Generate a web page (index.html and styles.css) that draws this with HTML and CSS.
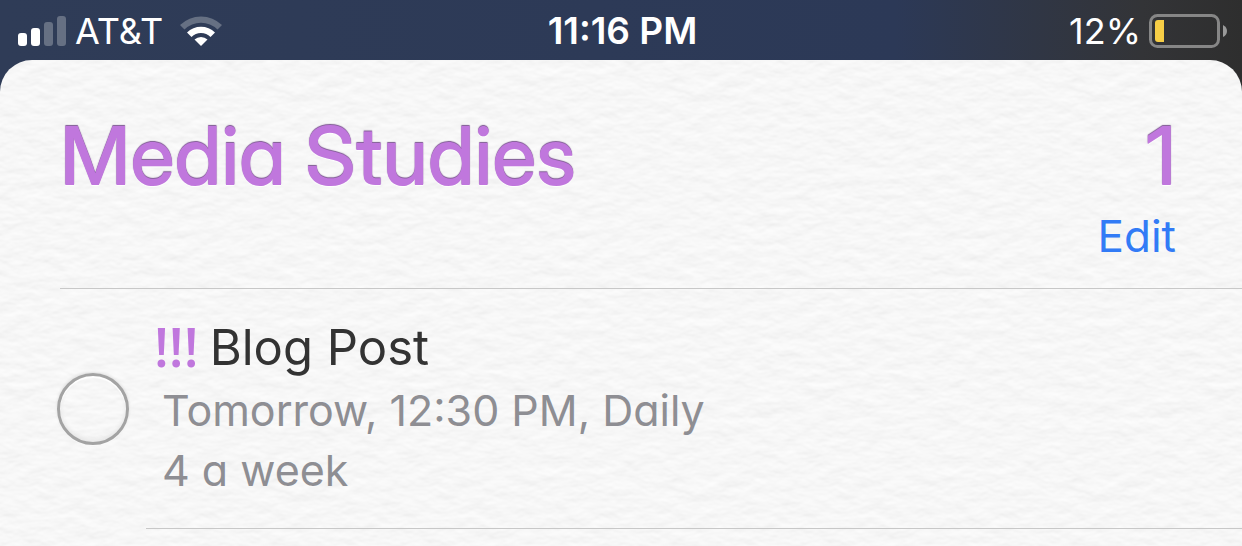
FILE: index.html
```html
<!DOCTYPE html>
<html lang="en">
<head>
  <meta charset="UTF-8" />
  <meta name="viewport" content="width=device-width, initial-scale=1.0"/>
  <title>Media Studies</title>
  <link rel="stylesheet" href="styles.css">
</head>
<body>
  <div class="status-bar">
    <div class="status-left">
      <svg class="signal" width="48" height="30" viewBox="0 0 48 30" aria-hidden="true">
        <rect x="0" y="17" width="9" height="13" rx="3" fill="#fff"/>
        <rect x="13" y="12" width="9" height="18" rx="3" fill="#fff"/>
        <rect x="26" y="6" width="9" height="24" rx="3" fill="#667083"/>
        <rect x="39" y="0" width="9" height="30" rx="3" fill="#667083"/>
      </svg>
      <span>AT&amp;T</span>
      <svg class="wifi" width="42" height="30" viewBox="0 0 42 30" aria-hidden="true">
        <path d="M0 9 A30 30 0 0 1 42 9 L37.500 13.500 A23.500 23.500 0 0 0 4.500 13.500 Z" fill="#667083"/>
        <path d="M7 16.500 A20 20 0 0 1 35 16.500 L30.500 21 A13.500 13.500 0 0 0 11.500 21 Z" fill="#fff"/>
        <path d="M14.500 23.500 A9.500 9.500 0 0 1 27.500 23.500 L21 30 Z" fill="#fff"/>
      </svg>
    </div>
    <time class="clock">11:16 PM</time>
    <div class="status-right">
      <span>12%</span>
      <svg class="battery" width="78" height="34" viewBox="0 0 78 34" aria-hidden="true">
        <rect x="1.500" y="1.500" width="68" height="31" rx="7" fill="none" stroke="#868686" stroke-width="3"/>
        <path d="M9 6 H15 V28 H9 Q6 28 6 25 V9 Q6 6 9 6 Z" fill="#f7ce46"/>
        <path d="M74 11 Q78 13 78 17 Q78 21 74 23 Z" fill="#9a9a9a"/>
      </svg>
    </div>
  </div>

  <main class="sheet">
    <header class="list-header">
      <div class="list-title">
        <h1>Media Studies</h1>
        <span class="count">1</span>
      </div>
      <button type="button" class="edit">Edit</button>
    </header>

    <ul class="tasks">
      <li class="task">
        <input type="checkbox" id="task1" class="check" />
        <div class="task-body">
          <label for="task1" class="task-name"><span class="priority">!!!</span>Blog Post</label>
          <p>Tomorrow, 12:30 PM, Daily</p>
          <p>4 a week</p>
        </div>
      </li>
    </ul>
  </main>
</body>
</html>
```

FILE: styles.css
```css
* {
  box-sizing: border-box;
  margin: 0;
  padding: 0;
}

body {
  font-family: Inter, 'Liberation Sans', sans-serif;
  background: linear-gradient(90deg, #2f3c57 0%, #2c3957 72%, #333437 92%, #2e2e2e 100%);
  display: flex;
  flex-direction: column;
  min-height: 100vh;
}

/* status bar */
.status-bar {
  display: grid;
  grid-template-columns: 1fr auto 1fr;
  align-items: center;
  height: 60px;
  padding: 1px 15px 0 18px;
  color: white;
  font-size: 36px;
}

.status-left,
.status-right {
  display: flex;
  align-items: center;
}

.status-right {
  justify-content: flex-end;
  gap: 8px;
}

.signal {
  margin-right: 9px;
}

.wifi {
  margin-left: 17px;
}

.clock {
  font-size: 37px;
  font-weight: 600;
}

/* paper sheet */
.sheet {
  flex: 1;
  border-radius: 32px 32px 0 0;
  background-color: #f7f7f7;
  background-image: url("data:image/svg+xml,%3Csvg xmlns='http://www.w3.org/2000/svg' width='400' height='400'%3E%3Cfilter id='p' x='0' y='0' width='100%25' height='100%25' color-interpolation-filters='sRGB'%3E%3CfeTurbulence type='fractalNoise' baseFrequency='.045 .08' numOctaves='3' seed='4' stitchTiles='stitch'/%3E%3CfeDiffuseLighting surfaceScale='.45' diffuseConstant='1.03' lighting-color='%23f8f8f8'%3E%3CfeDistantLight azimuth='270' elevation='75'/%3E%3C/feDiffuseLighting%3E%3C/filter%3E%3Crect width='400' height='400' filter='url(%23p)'/%3E%3C/svg%3E");
}

.list-header {
  display: flex;
  flex-direction: column;
  margin-left: 60px;
  padding: 48px 66px 24px 0;
  border-bottom: 1px solid #c8c8c8;
}

.list-title {
  display: flex;
  justify-content: space-between;
  font-family: 'Inter Display', Inter, sans-serif;
  font-size: 81px;
  line-height: 96px;
  color: #c077dd;
  text-shadow: 0 -1px 1px #7d5792, 0 1px 1px white;
}

h1,
.count {
  font-size: inherit;
  font-weight: 500;
}

h1,
.task-body p {
  font-feature-settings: 'cv11';
}

.edit {
  align-self: flex-end;
  margin-top: 4px;
  border: none;
  background: none;
  color: #327bf6;
  font: inherit;
  font-size: 44px;
  line-height: 56px;
  cursor: pointer;
}

/* tasks */
.tasks {
  list-style: none;
}

.task {
  display: flex;
  align-items: center;
  gap: 17px;
  padding-left: 57px;
}

.check {
  appearance: none;
  flex: none;
  width: 72px;
  height: 72px;
  border: 3px solid #a3a3a3;
  border-radius: 50%;
  box-shadow: 0 -1px 3px #dcdcdc, 0 1px 1px white, inset 0 2px 1px white, inset 0 -2px 4px #e4e4e4;
}

.check:checked {
  background: radial-gradient(#c077dd 60%, transparent 62%);
}

.task-body {
  flex: 1;
  padding: 27px 16px 28px;
  border-bottom: 1px solid #c8c8c8;
}

.task-name {
  display: flex;
  gap: 11px;
  margin-left: -8px;
  font-size: 49px;
  line-height: 64px;
  color: #333;
}

.priority {
  font-family: 'Open Sans', sans-serif;
  font-size: 54px;
  font-weight: 600;
  line-height: 60px;
  color: #c077dd;
}

.task-body p {
  font-size: 43px;
  line-height: 60px;
  color: #8e8e93;
}
```
